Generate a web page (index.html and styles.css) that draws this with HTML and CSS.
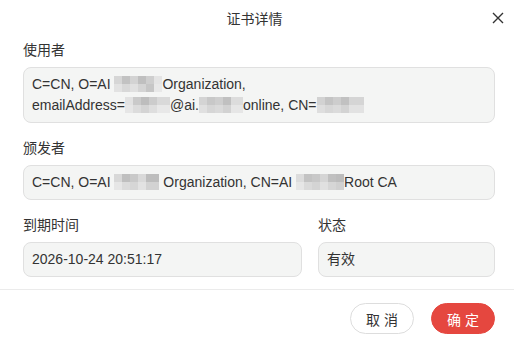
FILE: index.html
```html
<!DOCTYPE html>
<html lang="zh-CN">
<head>
  <meta charset="UTF-8">
  <meta name="viewport" content="width=device-width, initial-scale=1.0">
  <title>证书详情</title>
  <link rel="stylesheet" href="styles.css">
</head>
<body>
  <div class="dialog">
    <header class="dialog-head">
      <span></span>
      <h1 class="dialog-title">证书详情</h1>
      <button class="close-btn" aria-label="关闭">
        <svg width="12" height="12" viewBox="0 0 12 12"><path d="M1 1L11 11M11 1L1 11" stroke="#333" stroke-width="1.4" fill="none"/></svg>
      </button>
    </header>

    <main class="dialog-body">
      <div class="field">
        <div class="label">使用者</div>
        <div class="value">C=CN, O=AI <svg class="mask" width="48" height="16" viewBox="0 0 48 16"><rect width="8" height="8" fill="#d6d6d6"/><rect x="8" width="8" height="8" fill="#c2c2c2"/><rect x="16" width="8" height="8" fill="#d3d3d3"/><rect x="24" width="8" height="8" fill="#bfbfbf"/><rect x="32" width="8" height="8" fill="#cecece"/><rect x="40" width="8" height="8" fill="#e4e4e4"/><rect y="8" width="8" height="8" fill="#e2e2e2"/><rect x="8" y="8" width="8" height="8" fill="#d8d8d8"/><rect x="16" y="8" width="8" height="8" fill="#e0e0e0"/><rect x="24" y="8" width="8" height="8" fill="#d4d4d4"/><rect x="32" y="8" width="8" height="8" fill="#c6c6c6"/><rect x="40" y="8" width="8" height="8" fill="#e8e8e8"/></svg>Organization,<br>emailAddress=<svg class="mask" width="45" height="16" viewBox="0 0 45 16"><rect width="8" height="8" fill="#e2e2e2"/><rect x="8" width="8" height="8" fill="#cacaca"/><rect x="16" width="8" height="8" fill="#bdbdbd"/><rect x="24" width="8" height="8" fill="#cccccc"/><rect x="32" width="13" height="8" fill="#d9d9d9"/><rect y="8" width="8" height="8" fill="#e6e6e6"/><rect x="8" y="8" width="8" height="8" fill="#dcdcdc"/><rect x="16" y="8" width="8" height="8" fill="#d4d4d4"/><rect x="24" y="8" width="8" height="8" fill="#dedede"/><rect x="32" y="8" width="13" height="8" fill="#e8e8e8"/></svg>@ai.<svg class="mask" width="44" height="16" viewBox="0 0 44 16"><rect width="8" height="8" fill="#d4d4d4"/><rect x="8" width="8" height="8" fill="#c8c8c8"/><rect x="16" width="8" height="8" fill="#cecece"/><rect x="24" width="8" height="8" fill="#c0c0c0"/><rect x="32" width="12" height="8" fill="#dcdcdc"/><rect y="8" width="8" height="8" fill="#e0e0e0"/><rect x="8" y="8" width="8" height="8" fill="#d6d6d6"/><rect x="16" y="8" width="8" height="8" fill="#dadada"/><rect x="24" y="8" width="8" height="8" fill="#d2d2d2"/><rect x="32" y="8" width="12" height="8" fill="#e6e6e6"/></svg>online, CN=<svg class="mask" width="47" height="16" viewBox="0 0 47 16"><rect width="8" height="8" fill="#d2d2d2"/><rect x="8" width="8" height="8" fill="#c4c4c4"/><rect x="16" width="8" height="8" fill="#cdcdcd"/><rect x="24" width="8" height="8" fill="#c1c1c1"/><rect x="32" width="15" height="8" fill="#d5d5d5"/><rect y="8" width="8" height="8" fill="#dedede"/><rect x="8" y="8" width="8" height="8" fill="#d7d7d7"/><rect x="16" y="8" width="8" height="8" fill="#dbdbdb"/><rect x="24" y="8" width="8" height="8" fill="#d3d3d3"/><rect x="32" y="8" width="15" height="8" fill="#e2e2e2"/></svg></div>
      </div>

      <div class="field">
        <div class="label">颁发者</div>
        <div class="value">C=CN, O=AI <svg class="mask" width="45" height="16" viewBox="0 0 45 16"><rect width="8" height="8" fill="#d8d8d8"/><rect x="8" width="8" height="8" fill="#bfbfbf"/><rect x="16" width="8" height="8" fill="#c9c9c9"/><rect x="24" width="8" height="8" fill="#d9d9d9"/><rect x="32" width="13" height="8" fill="#bdbdbd"/><rect y="8" width="8" height="8" fill="#e6e6e6"/><rect x="8" y="8" width="8" height="8" fill="#dbdbdb"/><rect x="16" y="8" width="8" height="8" fill="#d6d6d6"/><rect x="24" y="8" width="8" height="8" fill="#e2e2e2"/><rect x="32" y="8" width="13" height="8" fill="#d2d2d2"/></svg> Organization, CN=AI <svg class="mask" width="48" height="16" viewBox="0 0 48 16"><rect width="8" height="8" fill="#dcdcdc"/><rect x="8" width="8" height="8" fill="#c3c3c3"/><rect x="16" width="8" height="8" fill="#c8c8c8"/><rect x="24" width="8" height="8" fill="#d5d5d5"/><rect x="32" width="8" height="8" fill="#c0c0c0"/><rect x="40" width="8" height="8" fill="#bcbcbc"/><rect y="8" width="8" height="8" fill="#e6e6e6"/><rect x="8" y="8" width="8" height="8" fill="#dadada"/><rect x="16" y="8" width="8" height="8" fill="#d4d4d4"/><rect x="24" y="8" width="8" height="8" fill="#e0e0e0"/><rect x="32" y="8" width="8" height="8" fill="#d6d6d6"/><rect x="40" y="8" width="8" height="8" fill="#d0d0d0"/></svg>Root CA</div>
      </div>

      <div class="field-row">
        <div class="field">
          <div class="label">到期时间</div>
          <div class="value">2026-10-24 20:51:17</div>
        </div>
        <div class="field">
          <div class="label">状态</div>
          <div class="value">有效</div>
        </div>
      </div>
    </main>

    <footer class="dialog-foot">
      <button class="btn btn-cancel">取消</button>
      <button class="btn btn-ok">确定</button>
    </footer>
  </div>
</body>
</html>
```

FILE: styles.css
```css
body {
  margin: 0;
  background: #fff;
  font-family: "Liberation Sans", Arial, "Noto Sans CJK SC", sans-serif;
  font-size: 14px;
  color: #333;
}
.dialog {
  width: 514px;
  height: 346px;
  background: #fff;
}
.dialog-head {
  height: 36px;
  display: grid;
  grid-template-columns: 1fr auto 1fr;
  align-items: center;
  padding: 0 9px 0 0;
}
.dialog-title {
  margin: 0;
  font-size: 14px;
  font-weight: normal;
  color: #333;
  padding-left: 4px;
}
.close-btn {
  justify-self: end;
  width: 14px;
  height: 14px;
  padding: 0;
  border: none;
  background: none;
  display: flex;
  align-items: center;
  justify-content: center;
  cursor: pointer;
}
.dialog-body {
  padding: 4px 19px 12px 23px;
  border-bottom: 1px solid #ebebeb;
}
.field {
  margin-bottom: 15px;
}
.field-row {
  display: grid;
  grid-template-columns: 1fr 177px;
  gap: 16px;
}
.field-row .field {
  margin-bottom: 0;
}
.label {
  line-height: 20px;
  margin-bottom: 7px;
  color: #333;
}
.value {
  background: #f4f5f4;
  border: 1px solid #e0e0e0;
  border-radius: 8px;
  padding: 6px 8px;
  line-height: 21px;
  color: #333;
}
.mask {
  vertical-align: -3px;
}
.dialog-foot {
  display: flex;
  justify-content: flex-end;
  gap: 17px;
  padding: 13px 19px 0 0;
}
.btn {
  width: 64px;
  height: 31px;
  border-radius: 16px;
  font-family: inherit;
  font-size: 14px;
  letter-spacing: 4px;
  text-indent: 4px;
  cursor: pointer;
}
.btn-cancel {
  background: #fff;
  border: 1px solid #dddddd;
  color: #333;
}
.btn-ok {
  background: #e5473f;
  border: 1px solid #e5473f;
  color: #fff;
}
```
